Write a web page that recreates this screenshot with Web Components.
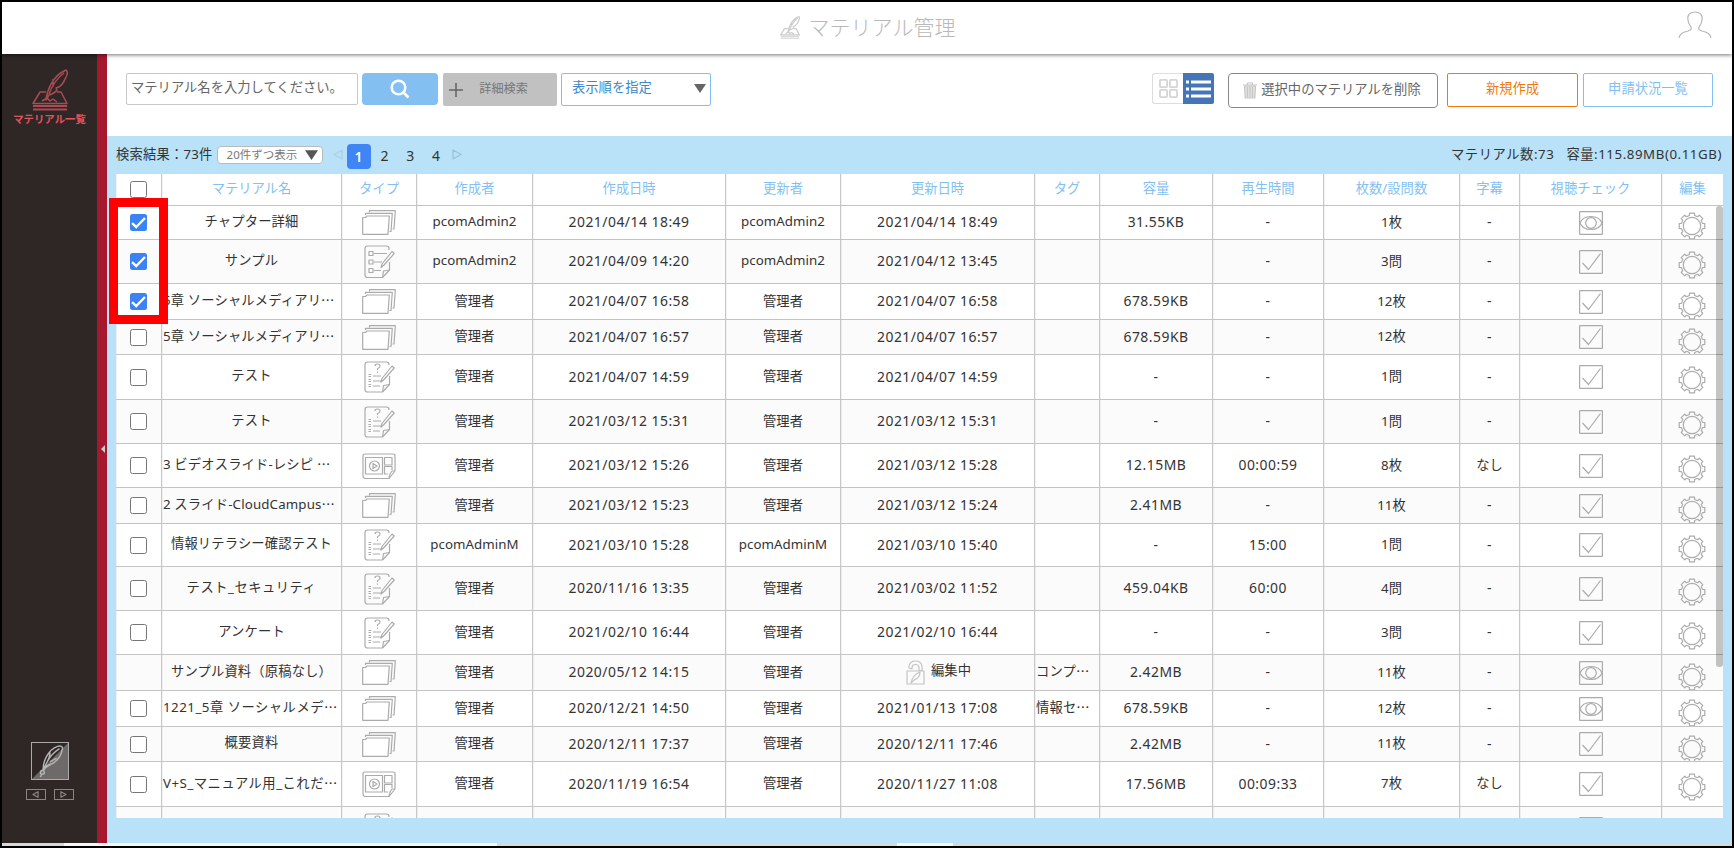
<!DOCTYPE html>
<html lang="ja">
<head>
<meta charset="utf-8">
<title>マテリアル管理</title>
<style>
html, body {
  margin: 0;
  height: 100%;
  overflow: hidden;
}
body {
  font-family: "Noto Sans", "Noto Sans CJK JP", sans-serif;
  font-size: 13.3px;
  color: #333;
}
</style>
</head>
<body>
<material-app></material-app>

<script>
;(function(){
'use strict'

// every icon of the page, drawn in its own view box
const ICONS = {
  stand: ['0 0 36 42', '<path d="M14 31C15 22 20 7 34 1c2 2 1 6-1 9-1 3-3 6-6 8l-3 1 1 2c-2 3-5 4-8 5zM17 25C20 17 25 9 32 4M21 18V10"/>' +
    '<path d="M14 23H8L1 34.500H35L29 23H25M10 32l5-3 3 3 3-2 4 3" /><path d="M1 37h34M1 40.500h34" stroke-width="1.800"/>'],
  user: ['0 0 34 28', '<path d="M1 27C2 22 6 21 10 20c3-1 4-2 3-4C11 13 10 12 10 9 9 4 12 1 17 1s8 3 7 8c0 3-1 4-3 7-1 2 0 3 3 4 4 1 8 2 9 7"/>'],
  search: ['0 0 20 20', '<circle cx="8.5" cy="8.500" r="6.800"/><path d="M13.500 13.500 18.500 18.500"/>'],
  plus: ['0 0 14 14', '<path d="M7 0v14M0 7h14"/>'],
  down: ['0 0 12 9', '<path d="M0 0h12L6 9z" fill="currentColor" stroke="none"/>'],
  left: ['0 0 10 11', '<path d="M9 1v9L1 5.500z"/>'],
  right: ['0 0 10 11', '<path d="M1 1v9L9 5.500z"/>'],
  tiles: ['0 0 20 20', '<rect x="1" y="1" width="7.500" height="7.500" rx="1"/><rect x="11.500" y="1" width="7.500" height="7.500" rx="1"/><rect x="1" y="11.500" width="7.500" height="7.500" rx="1"/><rect x="11.500" y="11.500" width="7.500" height="7.500" rx="1"/>'],
  lines: ['0 0 26 18', '<path d="M0 2h3M0 9h3M0 16h3M5 2h20M5 9h20M5 16h20"/>'],
  trash: ['0 0 14 17', '<path d="M1.500 4l.7 12h9.600l.7-12z" fill="#e2e2e2"/><path d="M0 3h14M4.500 2.500V1h5v1.500M4.500 5v10M7 5v10M9.500 5v10"/>'],
  slides: ['0 0 34 25', '<path d="M7.500 2.500V.7H33.300L32 19H30.500"/><path d="M3.500 5V3.300H30.300L29 21.500H27.500"/><path d="M.7 7.500H3.500L5 6H27.300L26 24.300H.7z" fill="#fff"/>'],
  list: ['0 0 31 34', '<path d="M25 5V3.500Q25 1 22.500 1H3.500Q1 1 1 3.500V30q0 2.500 2.500 2.500H18.500L25.500 25V17"/><path d="M18.500 32.500 19.500 26 25.500 25"/><path d="M30.200 8.500 20 20l-3 2.500L18 19 28 6.500z" fill="#fff"/><path d="M5 6.500h4v4H5zM5 15h4v4H5zM5 23.500h4v4H5zM10 8.500h13M10 17h8M10 25.500h7"/>'],
  quiz: ['0 0 31 32', '<path d="M25 4V3.500Q25 1 22.500 1H3.500Q1 1 1 3.500V28.500Q1 31 3.500 31H18.500L25.500 23.500V15"/><path d="M18.500 31 19.500 24.500 25.500 23.500"/><path d="M30.200 7 20 18.500l-3 2.500L18 17.500 28 5z" fill="#fff"/><path d="M11 5q0-2 2.500-2t2.500 2q0 1.500-1.500 2t-1 2M13.500 10.500v1.200M9 15h8M9 20h8M9 25h7"/><path d="M4.500 13.500h2.500M4.500 15.500h2.500M4.500 18.500h2.500M4.500 20.500h2.500M4.500 23.500h2.500M4.500 25.500h2.500"/>'],
  video: ['0 0 34 26', '<path d="M33 18V3q0-2-2-2H3Q1 1 1 3V23q0 2 2 2.500H27L33 18"/><path d="M27 25.500 28 21 30 18h3"/><path d="M3.500 4.500H20.500V21H3.500zM22.500 4.500h7.500V12h-7.500zM30 17V13.500h-7.500V21H26"/><circle cx="12.500" cy="13" r="5"/><path d="M11 10.500v5l4-2.500z"/>'],
  eye: ['0 0 24 24', '<rect x=".6" y=".6" width="22.800" height="22.800" rx=".5"/><path d="M1 12C3 7 7 5.500 12 5.500s9 1.500 11 6.500c-2 5-6 6.500-11 6.500S3 17 1 12z"/><circle cx="12" cy="12" r="5.300"/>'],
  check: ['0 0 24 24', '<rect x=".6" y=".6" width="22.800" height="22.800" rx=".5"/><path d="M3.500 13 9.500 19.500 21.500 3.500"/>'],
  lock: ['0 0 19 25', '<path d="M3 8V6q1-5 6.500-5T16 6v4.500H13V7q-.5-2.500-3.500-2.500T6 7v2z"/><path d="M1 11h17V24H1z"/><path d="M5 23c1-5 4-9 9-11 0 5-3 7-6 8z"/>'],
  feather: ['0 0 38 38', '<path d="M38 0V38H0z" fill="#6e6a6a" stroke="none"/><path d="M12 29C11 20 17 7 27 3.500c3-1 6 0 5 3C31 13 28 17 24 20c-3 3-8 3-12 9zM12 29C15 20 21 11 29 6M16 20C18 16 19 14 19 10M19 20l7-4M14 25l6-3"/><circle cx="11" cy="31" r="2"/><path d="M10 33 9 36"/>']
}

// the gear outline is eight teeth round a ring
function gear(){
  let p = []
  for(let i = 0; i < 8; i++){
    for(let [r, a] of [[10.800, -14], [13, -11], [13, 11], [10.800, 14]]){
      let t = (i * 45 + a) * Math.PI / 180
      p.push((14 + r * Math.sin(t)).toFixed(1) + ',' + (14 - r * Math.cos(t)).toFixed(1))
    }
  }
  return `<polygon points="${p.join(' ')}"/><circle cx="14" cy="14" r="8.700"/>`
}
ICONS.gear = ['0 0 28 28', gear()]

class UiIcon extends HTMLElement {
  constructor(){super()
    this.attachShadow({mode: 'open'})
  }
  connectedCallback(){
    const [box, body] = ICONS[this.getAttribute('name')]
    const [,, w, h] = box.split(' ')
    this.shadowRoot.innerHTML = `
<style>
:host {
  display: inline-block;
  flex: none;
  line-height: 0;
}
svg {
  display: block;
  fill: none;
  stroke: currentColor;
  stroke-width: var(--stroke, 1.2);
  stroke-linejoin: round;
}
</style>
<svg viewBox="${box}" width="${this.getAttribute('w') ?? w}" height="${this.getAttribute('h') ?? h}">${body}</svg>`
  }
}
customElements.define('ui-icon', UiIcon)

class UiButton extends HTMLElement {
  constructor(){super()
    this.attachShadow({mode: 'open'}).innerHTML = `
<style>
:host {
  display: flex;
  box-sizing: border-box;
  align-items: center;
  justify-content: center;
  border: 1px solid currentColor;
  border-radius: 2px;
  white-space: nowrap;
  line-height: 1;
}
</style>
<slot></slot>`
  }
}
customElements.define('ui-button', UiButton)

class CheckBox extends HTMLElement {
  constructor(){super()
    this.attachShadow({mode: 'open'}).innerHTML = `
<style>
:host {
  display: block;
  box-sizing: border-box;
  width: 17px;
  height: 17px;
  border: 1.5px solid #767676;
  border-radius: 2.500px;
  background: #fff;
}
:host([checked]) {
  border: 0;
  background: #3b82f6;
}
svg {
  display: none;
}
:host([checked]) svg {
  display: block;
}
</style>
<svg width="17" height="17" viewBox="0 0 17 17"><path d="M2 9.200 6.200 13 15 4" fill="none" stroke="#fff" stroke-width="2.400"/></svg>`
  }
}
customElements.define('check-box', CheckBox)

class AppHeader extends HTMLElement {
  constructor(){super()
    this.attachShadow({mode: 'open'}).innerHTML = `
<style>
:host {
  display: grid;
  grid-template-columns: 1fr auto 1fr;
  height: 52px;
  background: #fff;
  box-shadow: 0 1px 4px rgba(0,0,0,.55);
  color: #b9b9b9;
  position: relative;
  z-index: 1;
}
.title {
  grid-column: 2;
  display: flex;
  align-items: center;
  gap: 9px;
  padding: 0 0 1px 1px;
  font-size: 21px;
  font-weight: 300;
  line-height: 1;
}
.title ui-icon {
  color: #cdcdcd;
  --stroke: 2.200;
}
.user {
  justify-self: end;
  padding: 9px 20px 0 0;
}
</style>
<div class="title"><ui-icon name="stand" w="20" h="23"></ui-icon><span><slot></slot></span></div>
<ui-icon class="user" name="user"></ui-icon>`
  }
}
customElements.define('app-header', AppHeader)

class SideBar extends HTMLElement {
  constructor(){super()
    this.attachShadow({mode: 'open'}).innerHTML = `
<style>
:host {
  display: flex;
  box-sizing: border-box;
  width: 105px;
  background: #2f2626;
}
.menu {
  flex: 1;
  display: flex;
  flex-direction: column;
  align-items: center;
  padding: 15px 0 43px;
}
.menu > ui-icon {
  color: #a94b55;
  --stroke: 1.500;
}
.label {
  padding-top: 2px;
  font-size: 10.400px;
  font-weight: 600;
  line-height: 12px;
  color: #e0525c;
  white-space: nowrap;
}
.tool {
  margin-top: auto;
  border: 1px solid #aaa;
  color: #b4b4b4;
  width: 36px;
  height: 36px;
  --stroke: 1.500;
}
.steps {
  display: flex;
  gap: 8px;
  padding-top: 9px;
}
.steps div {
  display: flex;
  align-items: center;
  justify-content: center;
  width: 18px;
  height: 9px;
  border: 1px solid #8b8686;
  color: #8b8686;
  --stroke: 1.800;
}
.edge {
  display: flex;
  align-items: center;
  justify-content: flex-end;
  width: 10px;
  background: #a5182d;
}
.edge i {
  border: 4px solid transparent;
  border-right-color: #ccc;
  border-left: 0;
  margin: 0 2px 0 0;
}
</style>
<div class="menu">
  <ui-icon name="stand" w="36" h="42"></ui-icon>
  <div class="label"><slot></slot></div>
  <div class="tool"><ui-icon name="feather" w="36" h="36"></ui-icon></div>
  <div class="steps"><div><ui-icon name="left" w="7" h="7"></ui-icon></div><div><ui-icon name="right" w="7" h="7"></ui-icon></div></div>
</div>
<div class="edge"><i></i></div>`
  }
}
customElements.define('side-bar', SideBar)

class ToolBar extends HTMLElement {
  constructor(){super()
    this.attachShadow({mode: 'open'}).innerHTML = `
<style>
:host {
  display: flex;
  align-items: flex-start;
  box-sizing: border-box;
  height: 82px;
  padding: 19px 19px 0;
  background: #fff;
}
.field {
  box-sizing: border-box;
  width: 232px;
  height: 32px;
  padding-left: 4px;
  border: 1.5px solid #c8c8c8;
  border-radius: 2px;
  line-height: 27px;
  white-space: nowrap;
  color: #666;
}
.search {
  width: 76px;
  height: 32px;
  margin-left: 4px;
  border: 0;
  border-radius: 4px;
  background: #84bff1;
  color: #fff;
  --stroke: 2.600;
}
.detail {
  width: 114px;
  height: 33px;
  margin-left: 5px;
  padding: 0 29px 0 6px;
  justify-content: space-between;
  border: 0;
  background: #c1c1c1;
  color: #777;
  font-size: 12.200px;
}
.detail ui-icon {
  color: #666;
  --stroke: 1.600;
}
.order {
  width: 150px;
  height: 33px;
  margin-left: 4px;
  padding: 0 4px 3px 10px;
  justify-content: space-between;
  border-color: #84bff1;
  color: #3b86c9;
}
.order ui-icon {
  color: #666;
}
.view {
  display: flex;
  box-sizing: border-box;
  width: 62px;
  height: 31px;
  margin: 0 14px 0 auto;
}
.view div {
  display: flex;
  align-items: center;
  justify-content: center;
  box-sizing: border-box;
  width: 31px;
  border: 1px solid #ddd;
  border-right: 0;
  border-radius: 3px 0 0 3px;
  color: #d5d5d5;
  --stroke: 1.900;
}
.view .on {
  border: 0;
  border-radius: 0 2px 2px 0;
  background: #4375b7;
  color: #fff;
  --stroke: 2.800;
}
.delete {
  width: 210px;
  height: 35px;
  margin-right: 9px;
  gap: 4px;
  padding: 0 2px 1px 0;
  border: 1.500px solid #888;
  border-radius: 4px;
  color: #666;
}
.delete ui-icon {
  color: #c6c6c6;
}
.new {
  width: 131px;
  height: 34px;
  margin-right: 5px;
  padding-bottom: 3px;
  color: #ef7a0b;
}
.status {
  width: 130px;
  height: 34px;
  padding-bottom: 3px;
  color: #84bff1;
}
</style>
<div class="field">マテリアル名を入力してください。</div>
<ui-button class="search"><ui-icon name="search"></ui-icon></ui-button>
<ui-button class="detail"><ui-icon name="plus"></ui-icon><span>詳細検索</span></ui-button>
<ui-button class="order"><span>表示順を指定</span><ui-icon name="down"></ui-icon></ui-button>
<div class="view"><div><ui-icon name="tiles" w="19" h="19"></ui-icon></div><div class="on"><ui-icon name="lines"></ui-icon></div></div>
<ui-button class="delete"><ui-icon name="trash"></ui-icon><span>選択中のマテリアルを削除</span></ui-button>
<ui-button class="new">新規作成</ui-button>
<ui-button class="status">申請状況一覧</ui-button>`
  }
}
customElements.define('tool-bar', ToolBar)

class ResultBar extends HTMLElement {
  constructor(){super()
    this.attachShadow({mode: 'open'}).innerHTML = `
<style>
:host {
  display: flex;
  align-items: center;
  box-sizing: border-box;
  height: 38px;
  padding: 0 1px 1px 0;
  white-space: nowrap;
  font-size: 13.300px;
  line-height: 1;
}
.found {
  letter-spacing: .2px;
}
.size {
  display: flex;
  align-items: center;
  gap: 8px;
  box-sizing: border-box;
  width: 106px;
  height: 18px;
  margin-left: 4px;
  padding: 0 4px 0 9px;
  border: 1px solid #bbb;
  border-radius: 4px;
  background: #fff;
  color: #777;
  font-size: 11.500px;
}
.size ui-icon {
  color: #555;
}
.arrow {
  color: #9cc0d4;
}
.prev {
  margin-left: 10px;
  opacity: .5;
}
.pages {
  display: flex;
  align-items: center;
  margin: 3px 3px 0 4px;
}
.pages span {
  width: 25.800px;
  text-align: center;
  font-size: 14px;
}
.pages .on {
  width: 24px;
  margin-right: 1px;
  line-height: 25px;
  border-radius: 4px;
  background: #3f85f5;
  color: #fff;
  font-weight: 600;
}
.total {
  margin-left: auto;
  word-spacing: 2px;
  padding-top: 1px;
  letter-spacing: .55px;
}
</style>
<span class="found">検索結果：73件</span>
<div class="size"><span>20件ずつ表示</span><ui-icon name="down" w="13" h="10"></ui-icon></div>
<ui-icon class="arrow prev" name="left"></ui-icon>
<div class="pages"><span class="on">1</span><span>2</span><span>3</span><span>4</span></div>
<ui-icon class="arrow" name="right"></ui-icon>
<span class="total">マテリアル数:73 &nbsp;容量:115.89MB(0.11GB)</span>`
  }
}
customElements.define('result-bar', ResultBar)

const HEADS = ['', 'マテリアル名', 'タイプ', '作成者', '作成日時', '更新者', '更新日時', 'タグ', '容量', '再生時間', '枚数/設問数', '字幕', '視聴チェック', '編集']

// height, box (1 ticked, 0 empty, '' none), name, type, author, created, editor, updated, tag, size, length, count, captions, watch
const ROWS = [
  [34, 1, 'チャプター詳細', 'slides', 'pcomAdmin2', '2021/04/14 18:49', 'pcomAdmin2', '2021/04/14 18:49', '', '31.55KB', '-', '1枚', '-', 'eye'],
  [44, 1, 'サンプル', 'list', 'pcomAdmin2', '2021/04/09 14:20', 'pcomAdmin2', '2021/04/12 13:45', '', '', '-', '3問', '-', 'check'],
  [36, 1, '5章 ソーシャルメディアリ…', 'slides', '管理者', '2021/04/07 16:58', '管理者', '2021/04/07 16:58', '', '678.59KB', '-', '12枚', '-', 'check'],
  [35, 0, '5章 ソーシャルメディアリ…', 'slides', '管理者', '2021/04/07 16:57', '管理者', '2021/04/07 16:57', '', '678.59KB', '-', '12枚', '-', 'check'],
  [45, 0, 'テスト', 'quiz', '管理者', '2021/04/07 14:59', '管理者', '2021/04/07 14:59', '', '-', '-', '1問', '-', 'check'],
  [44, 0, 'テスト', 'quiz', '管理者', '2021/03/12 15:31', '管理者', '2021/03/12 15:31', '', '-', '-', '1問', '-', 'check'],
  [44, 0, '3 ビデオスライド-レシピ …', 'video', '管理者', '2021/03/12 15:26', '管理者', '2021/03/12 15:28', '', '12.15MB', '00:00:59', '8枚', 'なし', 'check'],
  [36, 0, '2 スライド-CloudCampus…', 'slides', '管理者', '2021/03/12 15:23', '管理者', '2021/03/12 15:24', '', '2.41MB', '-', '11枚', '-', 'check'],
  [43, 0, '情報リテラシー確認テスト', 'quiz', 'pcomAdminM', '2021/03/10 15:28', 'pcomAdminM', '2021/03/10 15:40', '', '-', '15:00', '1問', '-', 'check'],
  [44, 0, 'テスト_セキュリティ', 'quiz', '管理者', '2020/11/16 13:35', '管理者', '2021/03/02 11:52', '', '459.04KB', '60:00', '4問', '-', 'check'],
  [44, 0, 'アンケート', 'quiz', '管理者', '2021/02/10 16:44', '管理者', '2021/02/10 16:44', '', '-', '-', '3問', '-', 'check'],
  [36, '', 'サンプル資料（原稿なし）', 'slides', '管理者', '2020/05/12 14:15', '管理者', '編集中', 'コンプ…', '2.42MB', '-', '11枚', '-', 'eye'],
  [36, 0, '1221_5章 ソーシャルメデ…', 'slides', '管理者', '2020/12/21 14:50', '管理者', '2021/01/13 17:08', '情報セ…', '678.59KB', '-', '12枚', '-', 'eye'],
  [35, 0, '概要資料', 'slides', '管理者', '2020/12/11 17:37', '管理者', '2020/12/11 17:46', '', '2.42MB', '-', '11枚', '-', 'check'],
  [45, 0, 'V+S_マニュアル用_これだ…', 'video', '管理者', '2020/11/19 16:54', '管理者', '2020/11/27 11:08', '', '17.56MB', '00:09:33', '7枚', 'なし', 'check'],
  [44, '', '', 'quiz', '', '', '', '', '', '', '', '', '', 'check']
]

class MaterialRow extends HTMLElement {
  static style = `
<style>
:host {
  display: grid;
  grid-template-columns: 46px 180px 75px 116px 193px 115px 194px 65px 113px 111px 136px 60px 142px 61px;
  box-sizing: border-box;
  border-bottom: 1px solid #c4c4c4;
  background: #fff;
  overflow: hidden;
  color: #333;
}
:host(:nth-child(even)) {
  background: #fbfbfb;
}
div {
  display: flex;
  align-items: center;
  justify-content: center;
  box-sizing: border-box;
  min-width: 0;
  overflow: hidden;
  border-right: 1.500px solid #c8c8c8;
  box-shadow: inset 1px 0 rgba(0,0,0,.05);
  white-space: nowrap;
  line-height: 1;
}
div:last-child {
  border: 0;
}
div:first-child {
  padding: 0 1px 1px 0;
}
.head {
  padding-bottom: 1px;
  color: #84bff1;
}
.latin {
  padding-bottom: 1px;
  font-size: 13.900px;
  letter-spacing: .5px;
}
.user {
  font-size: 13.300px;
  letter-spacing: .05px;
}
.name, .tag {
  padding-bottom: 2px;
  letter-spacing: .15px;
}
.wide {
  letter-spacing: .5px;
}
.cut {
  justify-content: flex-start;
  padding-left: 1px;
}
.cut span {
  font-family: "Noto Sans CJK JP", sans-serif;
}
ui-icon {
  color: #ababab;
}
.edit {
  align-items: flex-start;
  padding-right: 1px;
}
.edit ui-icon {
  margin-top: var(--gear);
}
.lock {
  gap: 6px;
  padding-left: 2px;
}
.lock ui-icon {
  color: #c4c4c4;
}
.lock span {
  padding-bottom: 4px;
}
</style>`
  constructor(){super()
    this.attachShadow({mode: 'open'})
  }
  set heads(list){
    this.style.height = '32px'
    this.shadowRoot.innerHTML = MaterialRow.style + list.map((t, i)=>
      `<div class="head">${i ? t : '<check-box></check-box>'}</div>`).join('')
  }
  set cells(row){
    const [height, box, name, type, ...rest] = row
    const watch = rest.pop()
    this.style.height = height + 'px'
    this.style.setProperty('--gear', height < 35 ? '6px' : height < 40 ? '8px' : '11px')
    let html = `<div>${box === '' ? '' : `<check-box ${box ? 'checked' : ''}></check-box>`}</div>`
    html += this.text(name, name.includes('_') ? 'name wide' : 'name')
    html += `<div><ui-icon name="${type}"></ui-icon></div>`
    rest.forEach((t, i)=>{
      if(t == '編集中'){
        html += `<div class="lock"><ui-icon name="lock"></ui-icon><span>${t}</span></div>`
      }else{
        html += this.text(t, i == 4 ? 'tag' : '')
      }
    })
    html += `<div><ui-icon name="${watch}"></ui-icon></div>`
    html += '<div class="edit"><ui-icon name="gear"></ui-icon></div>'
    this.shadowRoot.innerHTML = MaterialRow.style + html
  }
  text(t, cls){
    if(t.endsWith('…')) return `<div class="${cls} cut"><bdi>${t.slice(0, -1).replace(/ $/, '&nbsp;')}<span>…</span></bdi></div>`
    if(/^[ -~]+$/.test(t)) cls += /^[a-z]/.test(t) ? ' latin user' : ' latin'
    return `<div class="${cls}">${t}</div>`
  }
}
customElements.define('material-row', MaterialRow)

class MaterialTable extends HTMLElement {
  constructor(){super()
    this.attachShadow({mode: 'open'}).innerHTML = `
<style>
:host {
  display: block;
  position: relative;
  height: 644px;
  width: 1607px;
}
.body {
  height: 612px;
  overflow: hidden;
}
.thumb {
  position: absolute;
  top: 32px;
  right: 0;
  width: 7px;
  height: 461px;
  border-radius: 3px;
  background: rgba(0,0,0,.23);
}
.mark {
  position: absolute;
  top: 24px;
  left: -7px;
  box-sizing: border-box;
  width: 59px;
  height: 126px;
  border: 9px solid #f00;
}
</style>
<div class="head"></div>
<div class="body"></div>
<div class="thumb"></div>
<div class="mark"></div>`
  }
  connectedCallback(){
    const head = document.createElement('material-row')
    head.heads = HEADS
    this.shadowRoot.querySelector('.head').appendChild(head)
    const body = this.shadowRoot.querySelector('.body')
    for(let r of ROWS){
      const row = document.createElement('material-row')
      row.cells = r
      body.appendChild(row)
    }
  }
}
customElements.define('material-table', MaterialTable)

class MaterialApp extends HTMLElement {
  constructor(){super()
    this.attachShadow({mode: 'open'}).innerHTML = `
<style>
:host {
  display: grid;
  grid-template: 52px 789px 3px / 105px 1fr;
  box-sizing: border-box;
  width: 1734px;
  height: 848px;
  border: 2px solid #000;
  background: #b9e2f8;
}
app-header, .foot {
  grid-column: 1 / 3;
}
.list {
  padding: 0 9px;
}
.foot {
  display: grid;
  grid-template-columns: 62px 433px 400px 56px 1fr;
  background: #d8d8d8;
}
.foot i:nth-child(even) {
  background: #f6f6f6;
}
</style>
<app-header>マテリアル管理</app-header>
<side-bar>マテリアル一覧</side-bar>
<main>
  <tool-bar></tool-bar>
  <div class="list">
    <result-bar></result-bar>
    <material-table></material-table>
  </div>
</main>
<div class="foot"><i></i><i></i><i></i><i></i><i></i></div>`
  }
}
customElements.define('material-app', MaterialApp)

})();
</script>
</body>
</html>
